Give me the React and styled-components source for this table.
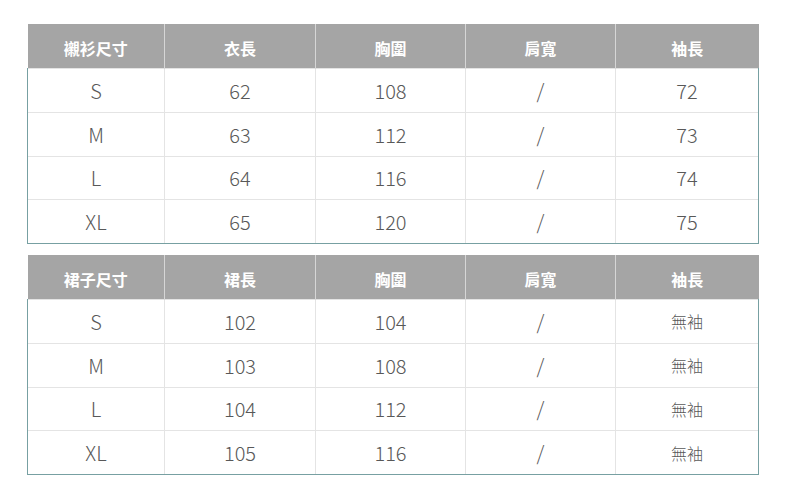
import React from "react";
import styled, { createGlobalStyle } from "styled-components";

const Global = createGlobalStyle`
  html, body { margin: 0; padding: 0; background: #ffffff; }
  body { font-family: "Noto Sans CJK TC", "Noto Sans", sans-serif; }
`;

const Page = styled.div`
  display: flex;
  flex-direction: column;
  gap: 11px;
  padding: 24px 0 0 27px;
`;

const Table = styled.table`
  width: 731px;
  border-collapse: collapse;
  table-layout: fixed;
`;

const HeadCell = styled.th`
  height: 40px;
  padding: 4px 0 0;
  background: #a5a5a5;
  color: #ffffff;
  font-size: 16px;
  font-weight: 700;
  text-align: center;
  vertical-align: middle;
  border-left: 1px solid #d6d6d6;
  &:first-child { border-left: none; }
`;

const Body = styled.tbody`
  & tr:last-child td { border-bottom: 1px solid #77a0a2; }
  & td:first-child { border-left: 1px solid #77a0a2; }
  & td:last-child { border-right: 1px solid #77a0a2; }
`;

const Cell = styled.td`
  height: 42.75px;
  padding: 0;
  text-align: center;
  vertical-align: middle;
  color: #585858;
  font-size: ${(p) => (p.$cjk ? "16px" : "20px")};
  font-weight: 300;
  border-top: 1px solid #e4e4e4;
  border-left: 1px solid #e4e4e4;
`;

const widths = [137, 151, 150, 150, 143];

function SizeTable({ head, rows }) {
  return (
    <Table>
      <colgroup>
        {widths.map((w, i) => (
          <col key={i} style={{ width: w }} />
        ))}
      </colgroup>
      <thead>
        <tr>
          {head.map((h) => (
            <HeadCell key={h}>{h}</HeadCell>
          ))}
        </tr>
      </thead>
      <Body>
        {rows.map((r, i) => (
          <tr key={i}>
            {r.map((c, j) => (
              <Cell key={j} $cjk={/[\u4e00-\u9fff]/.test(c)}>
                {c}
              </Cell>
            ))}
          </tr>
        ))}
      </Body>
    </Table>
  );
}

export default function App() {
  return (
    <>
      <Global />
      <Page>
        <SizeTable
          head={["襯衫尺寸", "衣長", "胸圍", "肩寬", "袖長"]}
          rows={[
            ["S", "62", "108", "/", "72"],
            ["M", "63", "112", "/", "73"],
            ["L", "64", "116", "/", "74"],
            ["XL", "65", "120", "/", "75"],
          ]}
        />
        <SizeTable
          head={["裙子尺寸", "裙長", "胸圍", "肩寬", "袖長"]}
          rows={[
            ["S", "102", "104", "/", "無袖"],
            ["M", "103", "108", "/", "無袖"],
            ["L", "104", "112", "/", "無袖"],
            ["XL", "105", "116", "/", "無袖"],
          ]}
        />
      </Page>
    </>
  );
}
